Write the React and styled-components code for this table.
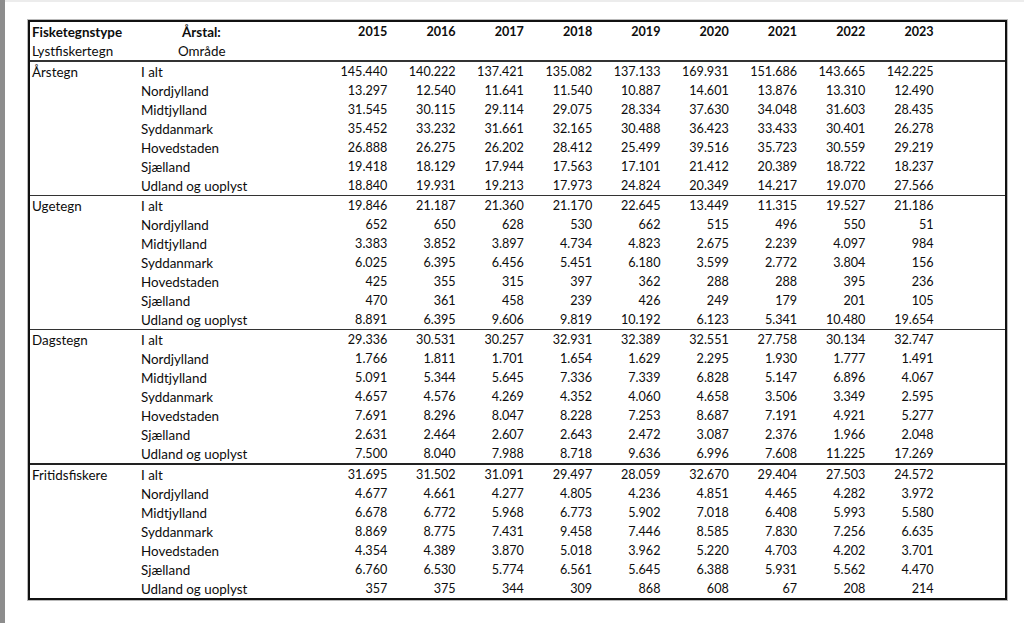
import React from "react";
import styled, { createGlobalStyle } from "styled-components";

const Global = createGlobalStyle`
  html, body { margin: 0; padding: 0; background: #fff; }
  body { font-family: Lato, "Liberation Sans", sans-serif; color: #0d0d0d; }
`;

const COLS = "107px 182px repeat(9, 68.3px) 1fr";

const Page = styled.div`
  display: flex;
  width: 1024px;
  height: 623px;
  overflow: hidden;
`;

const Strip = styled.div`
  width: 5px;
  flex: none;
  background: #8d8d8d;
`;

const Content = styled.div`
  flex: 1;
  border-top: 2px solid #ececec;
  padding: 18px 0 0 23px;
`;

const Table = styled.div`
  width: 975px;
  border: 2px solid #111;
  box-shadow: 0 0 0 1px #b9b9b9;
  font-size: 12.6px;
`;

const Header = styled.div`
  border-bottom: 1px solid #333;
`;

const Section = styled.div`
  border-top: ${(p) => (p.$thick ? "2px solid #222" : "1px solid #333")};
  &:first-of-type { border-top: none; }
`;

const Row = styled.div`
  display: grid;
  grid-template-columns: ${COLS};
  height: 19px;
  align-items: center;
  white-space: nowrap;
`;

const Cell = styled.div`
  padding-left: ${(p) => p.$pad ?? 2}px;
  font-size: 13.4px;
  font-weight: ${(p) => (p.$bold ? 700 : 400)};
`;

const Num = styled.div`
  text-align: right;
  font-weight: ${(p) => (p.$bold ? 700 : 400)};
`;

const years = [2015, 2016, 2017, 2018, 2019, 2020, 2021, 2022, 2023];
const regions = [
  "I alt",
  "Nordjylland",
  "Midtjylland",
  "Syddanmark",
  "Hovedstaden",
  "Sjælland",
  "Udland og uoplyst",
];

const data = [
  {
    name: "Årstegn",
    rows: [
      "145.440 140.222 137.421 135.082 137.133 169.931 151.686 143.665 142.225",
      "13.297 12.540 11.641 11.540 10.887 14.601 13.876 13.310 12.490",
      "31.545 30.115 29.114 29.075 28.334 37.630 34.048 31.603 28.435",
      "35.452 33.232 31.661 32.165 30.488 36.423 33.433 30.401 26.278",
      "26.888 26.275 26.202 28.412 25.499 39.516 35.723 30.559 29.219",
      "19.418 18.129 17.944 17.563 17.101 21.412 20.389 18.722 18.237",
      "18.840 19.931 19.213 17.973 24.824 20.349 14.217 19.070 27.566",
    ],
  },
  {
    name: "Ugetegn",
    rows: [
      "19.846 21.187 21.360 21.170 22.645 13.449 11.315 19.527 21.186",
      "652 650 628 530 662 515 496 550 51",
      "3.383 3.852 3.897 4.734 4.823 2.675 2.239 4.097 984",
      "6.025 6.395 6.456 5.451 6.180 3.599 2.772 3.804 156",
      "425 355 315 397 362 288 288 395 236",
      "470 361 458 239 426 249 179 201 105",
      "8.891 6.395 9.606 9.819 10.192 6.123 5.341 10.480 19.654",
    ],
  },
  {
    name: "Dagstegn",
    rows: [
      "29.336 30.531 30.257 32.931 32.389 32.551 27.758 30.134 32.747",
      "1.766 1.811 1.701 1.654 1.629 2.295 1.930 1.777 1.491",
      "5.091 5.344 5.645 7.336 7.339 6.828 5.147 6.896 4.067",
      "4.657 4.576 4.269 4.352 4.060 4.658 3.506 3.349 2.595",
      "7.691 8.296 8.047 8.228 7.253 8.687 7.191 4.921 5.277",
      "2.631 2.464 2.607 2.643 2.472 3.087 2.376 1.966 2.048",
      "7.500 8.040 7.988 8.718 9.636 6.996 7.608 11.225 17.269",
    ],
  },
  {
    name: "Fritidsfiskere",
    thick: true,
    rows: [
      "31.695 31.502 31.091 29.497 28.059 32.670 29.404 27.503 24.572",
      "4.677 4.661 4.277 4.805 4.236 4.851 4.465 4.282 3.972",
      "6.678 6.772 5.968 6.773 5.902 7.018 6.408 5.993 5.580",
      "8.869 8.775 7.431 9.458 7.446 8.585 7.830 7.256 6.635",
      "4.354 4.389 3.870 5.018 3.962 5.220 4.703 4.202 3.701",
      "6.760 6.530 5.774 6.561 5.645 6.388 5.931 5.562 4.470",
      "357 375 344 309 868 608 67 208 214",
    ],
  },
];

export default function App() {
  return (
    <>
      <Global />
      <Page>
        <Strip />
        <Content>
          <Table>
            <Header>
              <Row>
                <Cell $bold>Fisketegnstype</Cell>
                <Cell $bold $pad={45}>Årstal:</Cell>
                {years.map((y) => (
                  <Num key={y} $bold>{y}</Num>
                ))}
                <div />
              </Row>
              <Row>
                <Cell>Lystfiskertegn</Cell>
                <Cell $pad={41}>Område</Cell>
              </Row>
            </Header>
            {data.map((sec) => (
              <Section key={sec.name} $thick={sec.thick}>
                {sec.rows.map((r, i) => (
                  <Row key={i}>
                    <Cell>{i === 0 ? sec.name : ""}</Cell>
                    <Cell $pad={4}>{regions[i]}</Cell>
                    {r.split(" ").map((v, j) => (
                      <Num key={j}>{v}</Num>
                    ))}
                    <div />
                  </Row>
                ))}
              </Section>
            ))}
          </Table>
        </Content>
      </Page>
    </>
  );
}
